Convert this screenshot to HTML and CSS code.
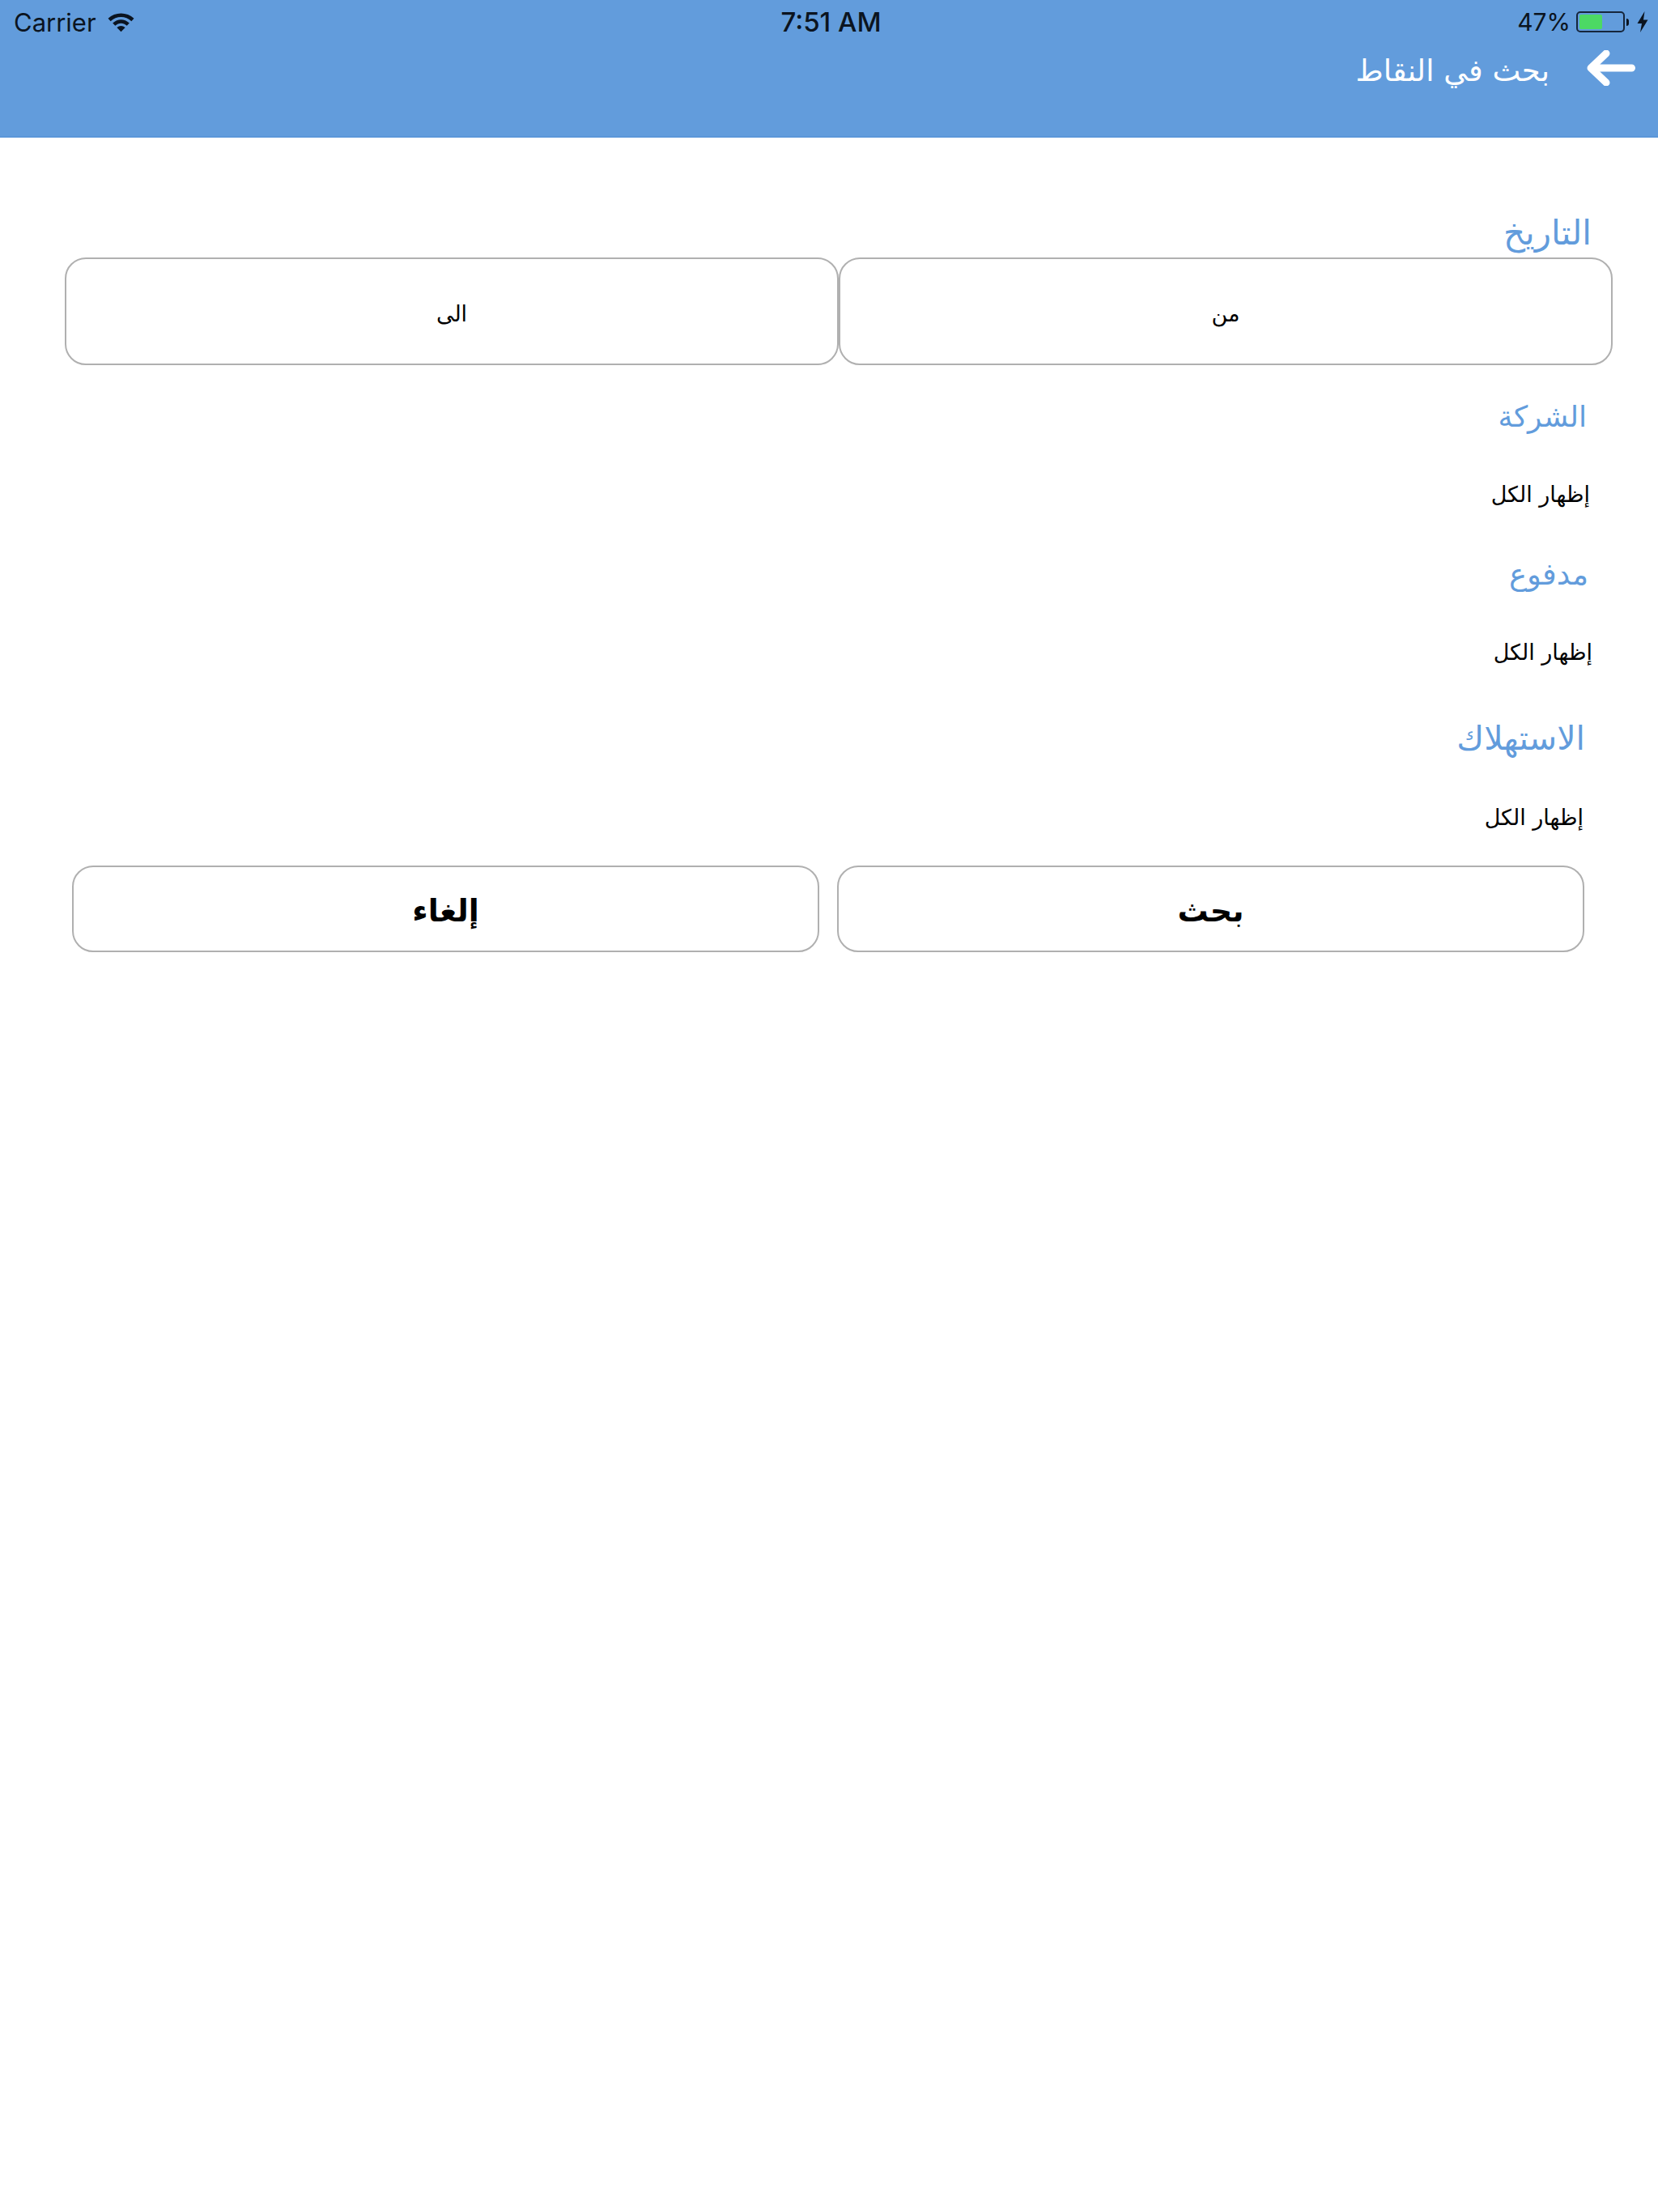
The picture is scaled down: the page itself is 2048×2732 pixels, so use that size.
FILE: index.html
```html
<!DOCTYPE html>
<html lang="ar">
<head>
<meta charset="utf-8">
<title>بحث في النقاط</title>
<link rel="stylesheet" href="styles.css">
</head>
<body>
<header class="header">
  <div class="status" dir="ltr">
    <div class="status-left">
      <span>Carrier</span>
      <svg class="wifi" viewBox="0 0 32 24" aria-hidden="true">
        <path d="M0.5 7.5C9 -0.8 23 -0.8 31.500 7.500L28.500 10.700C21.500 4 10.500 4 3.500 10.700Z"/>
        <path d="M6 13C12 7.500 20 7.500 26 13L23 16.200C18.500 12.200 13.500 12.200 9 16.200Z"/>
        <path d="M11 18.200C14 15.600 18 15.600 21 18.200L16 23.500Z"/>
      </svg>
    </div>
    <div class="status-time">7:51 AM</div>
    <div class="status-right">
      <span>47%</span>
      <span class="battery"><span class="battery-fill"></span></span>
      <span class="battery-tip"></span>
      <svg class="bolt" viewBox="0 0 14 26" aria-hidden="true"><path d="M9.500 0L0.500 15H6L4 26L13.500 10.500H8Z"/></svg>
    </div>
  </div>
  <div class="titlebar" dir="ltr">
    <h1 class="title" dir="rtl">بحث في النقاط</h1>
    <svg class="back" viewBox="0 0 60 44" aria-hidden="true"><path d="M55.500 22H6M24 4L5 22L24 40"/></svg>
  </div>
</header>
<main class="form" dir="rtl">
  <h2 class="label label-date">التاريخ</h2>
  <div class="range">
    <div class="range-box">من</div>
    <div class="range-box">الى</div>
  </div>
  <h2 class="label label-company">الشركة</h2>
  <p class="value value-company">إظهار الكل</p>
  <h2 class="label label-paid">مدفوع</h2>
  <p class="value value-paid">إظهار الكل</p>
  <h2 class="label label-usage">الاستهلاك</h2>
  <p class="value value-usage">إظهار الكل</p>
  <div class="actions">
    <button class="action" type="button">بحث</button>
    <button class="action" type="button">إلغاء</button>
  </div>
</main>
</body>
</html>
```
FILE: styles.css
```css
* { box-sizing: border-box; }
html, body { margin: 0; background: #fff; }
body { width: 2048px; height: 2732px; font-family: "DejaVu Sans", "Noto Sans", sans-serif; overflow: hidden; }

.header { height: 170px; background: #629cdc; border-bottom: 2px solid #5b97d9; }
.status { display: grid; grid-template-columns: 1fr auto 1fr; align-items: center; height: 54px; padding: 0 12px 0 17px; font-family: Inter, Roboto, sans-serif; font-size: 31px; color: #0b1420; }
.status-left { display: flex; align-items: center; gap: 14px; }
.wifi { width: 33px; height: 25px; fill: #0b1420; }
.status-time { font-weight: 500; font-size: 33px; }
.status-right { display: flex; align-items: center; justify-content: flex-end; font-size: 30px; }
.battery { display: block; width: 60px; height: 26px; margin-left: 7px; padding: 2px; border: 2px solid #16263c; border-radius: 5px; }
.battery-fill { display: block; width: 28px; height: 100%; background: #4cd964; border-radius: 2px; }
.battery-tip { display: block; width: 3px; height: 9px; margin-left: 2px; background: #0b1420; border-radius: 0 3px 3px 0; }
.bolt { width: 14px; height: 26px; margin-left: 10px; fill: #0b1420; }

.titlebar { display: flex; align-items: center; justify-content: flex-end; height: 60px; padding-right: 28px; }
.title { margin: 7px 46px 0 0; font-size: 37px; font-weight: 400; line-height: 60px; color: #fff; }
.back { width: 60px; height: 44px; fill: none; stroke: #fff; stroke-width: 9; stroke-linecap: round; stroke-linejoin: round; }

.form { display: flow-root; }
.label { margin: 0; font-weight: 400; line-height: 60px; height: 60px; color: #629cdc; }
.value { margin: 0; font-size: 27px; line-height: 40px; height: 40px; color: #000; }

.label-date { margin: 88px 82px 0 0; font-size: 42px; }
.range { display: flex; width: 1912px; height: 133px; margin: 0 56px 0 80px; }
.range-box { flex: 1; display: flex; align-items: center; justify-content: center; padding-top: 6px; font-size: 27px; color: #000; border: 2px solid #b0b0b0; border-radius: 26px; }
.label-company { margin: 34px 88px 0 0; font-size: 36px; }
.value-company { margin: 46px 84px 0 0; }
.label-paid { margin: 49px 86px 0 0; font-size: 37px; }
.value-paid { margin: 46px 81px 0 0; }
.label-usage { margin: 56px 90px 0 0; font-size: 41px; }
.value-usage { margin: 48px 92px 0 0; }

.actions { display: flex; gap: 22px; width: 1868px; height: 107px; margin: 39px 91px 0 89px; }
.action { flex: 1; padding: 4px 0 0; background: #fff; font-family: inherit; font-size: 38px; font-weight: 700; color: #000; border: 2px solid #b0b0b0; border-radius: 26px; }
```
